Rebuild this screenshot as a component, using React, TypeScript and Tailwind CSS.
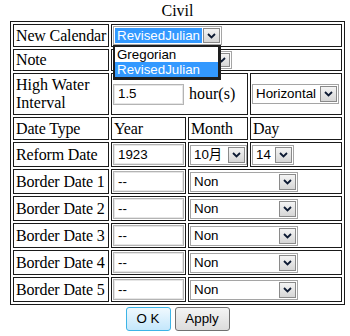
import React from "react";

const sans = "font-['Liberation_Sans',Arial,'Noto_Sans_CJK_JP',sans-serif] text-[13.33px]";

function Chevron() {
  return (
    <svg width="9" height="6" viewBox="0 0 9 6" className="block">
      <polyline points="1,1 4.5,4.5 8,1" fill="none" stroke="#0d1a33" strokeWidth="1.8" />
    </svg>
  );
}

function Arrow() {
  return (
    <div className="flex h-full w-[17px] shrink-0 items-center justify-center border border-[#8a8a8a] bg-linear-to-b from-[#f4f4f4] to-[#d6d6d6]">
      <Chevron />
    </div>
  );
}

function Select({
  cls,
  text,
  hl = false,
}: {
  cls: string;
  text: string;
  hl?: boolean;
}) {
  return (
    <div className={`flex shrink-0 items-stretch border border-[#a5a5a5] bg-white p-[1px] ${sans} ${cls}`}>
      <div
        className={`mr-[1px] flex min-w-0 flex-1 items-center overflow-hidden whitespace-nowrap pl-[2px] ${
          hl ? "bg-[#3399ff] text-white" : "text-black"
        }`}
      >
        {text}
      </div>
      <Arrow />
    </div>
  );
}

function Input({ text }: { text: string }) {
  return (
    <div
      className={`flex h-[21px] w-[71px] shrink-0 items-center border border-[#b4b4b4] bg-white pl-[4px] shadow-[inset_0_0_0_1px_#e6e6e6] ${sans}`}
    >
      {text}
    </div>
  );
}

function Cell({ children, cls = "" }: { children?: React.ReactNode; cls?: string }) {
  return (
    <div className={`flex items-center border border-[#1a1a1a] p-[1px] ${cls}`}>{children}</div>
  );
}

function Label({ children }: { children: React.ReactNode }) {
  return <span className="whitespace-nowrap pl-[1px] leading-[18px] tracking-[-0.15px]">{children}</span>;
}

export default function App() {
  const borders = [1, 2, 3, 4, 5];
  return (
    <div className="h-[336px] w-[350px] bg-white font-['Liberation_Serif',serif] text-[16px] text-black">
      <div className="ml-[10px] w-[335px]">
        <div className="h-[21px] text-center leading-[21px]">Civil</div>
        <div className="grid grid-cols-[96px_75px_60px_92px] grid-rows-[23px_22px_42px_23px_25px_25px_25px_25px_25px_25px] gap-[2px] border border-[#1a1a1a] p-[2px]">
          <Cell>
            <Label>New Calendar</Label>
          </Cell>
          <Cell cls="col-span-3">
            <div className="relative">
              <Select cls="h-[19px] w-[109px]" text="RevisedJulian" hl />
              <div
                className={`absolute left-0 top-[19px] z-10 w-[108px] border-l-2 border-t-2 border-r-[3px] border-b-[3px] border-[#1e1e1e] bg-white ${sans}`}
              >
                <div className="h-[15px] pl-[2px] leading-[15px]">Gregorian</div>
                <div className="h-[15px] bg-[#3399ff] pl-[2px] leading-[15px] text-white">RevisedJulian</div>
              </div>
            </div>
          </Cell>
          <Cell>
            <Label>Note</Label>
          </Cell>
          <Cell cls="col-span-3">
            <Select cls="h-[18px] w-[119px]" text="" />
          </Cell>
          <Cell>
            <span className="pl-[1px] leading-[18px]">High Water Interval</span>
          </Cell>
          <Cell cls="col-span-2">
            <Input text="1.5" />
            <span className="ml-[5px] leading-[18px]">hour(s)</span>
          </Cell>
          <Cell>
            <Select cls="h-[20px] w-[87px]" text="Horizontal" />
          </Cell>
          <Cell>
            <Label>Date Type</Label>
          </Cell>
          <Cell>
            <Label>Year</Label>
          </Cell>
          <Cell>
            <Label>Month</Label>
          </Cell>
          <Cell>
            <Label>Day</Label>
          </Cell>
          <Cell>
            <Label>Reform Date</Label>
          </Cell>
          <Cell>
            <Input text="1923" />
          </Cell>
          <Cell>
            <Select cls="h-[20px] w-[57px]" text="10月" />
          </Cell>
          <Cell>
            <Select cls="h-[20px] w-[42px]" text="14" />
          </Cell>
          {borders.map((n) => (
            <React.Fragment key={n}>
              <Cell>
                <Label>Border Date {n}</Label>
              </Cell>
              <Cell>
                <Input text="--" />
              </Cell>
              <Cell cls="col-span-2">
                <Select cls="h-[20px] w-[108px]" text="Non" />
              </Cell>
            </React.Fragment>
          ))}
        </div>
        <div className={`mt-[2px] flex justify-center gap-[4px] ${sans}`}>
          <button className="h-[24px] w-[45px] rounded-[3px] border border-[#3cb4e6] bg-linear-to-b from-[#f0f9fe] to-[#c4e7fb] text-black">
            O K
          </button>
          <button className="h-[24px] w-[55px] rounded-[3px] border border-[#707070] bg-linear-to-b from-[#f4f4f4] to-[#dcdcdc] text-black">
            Apply
          </button>
        </div>
      </div>
    </div>
  );
}
